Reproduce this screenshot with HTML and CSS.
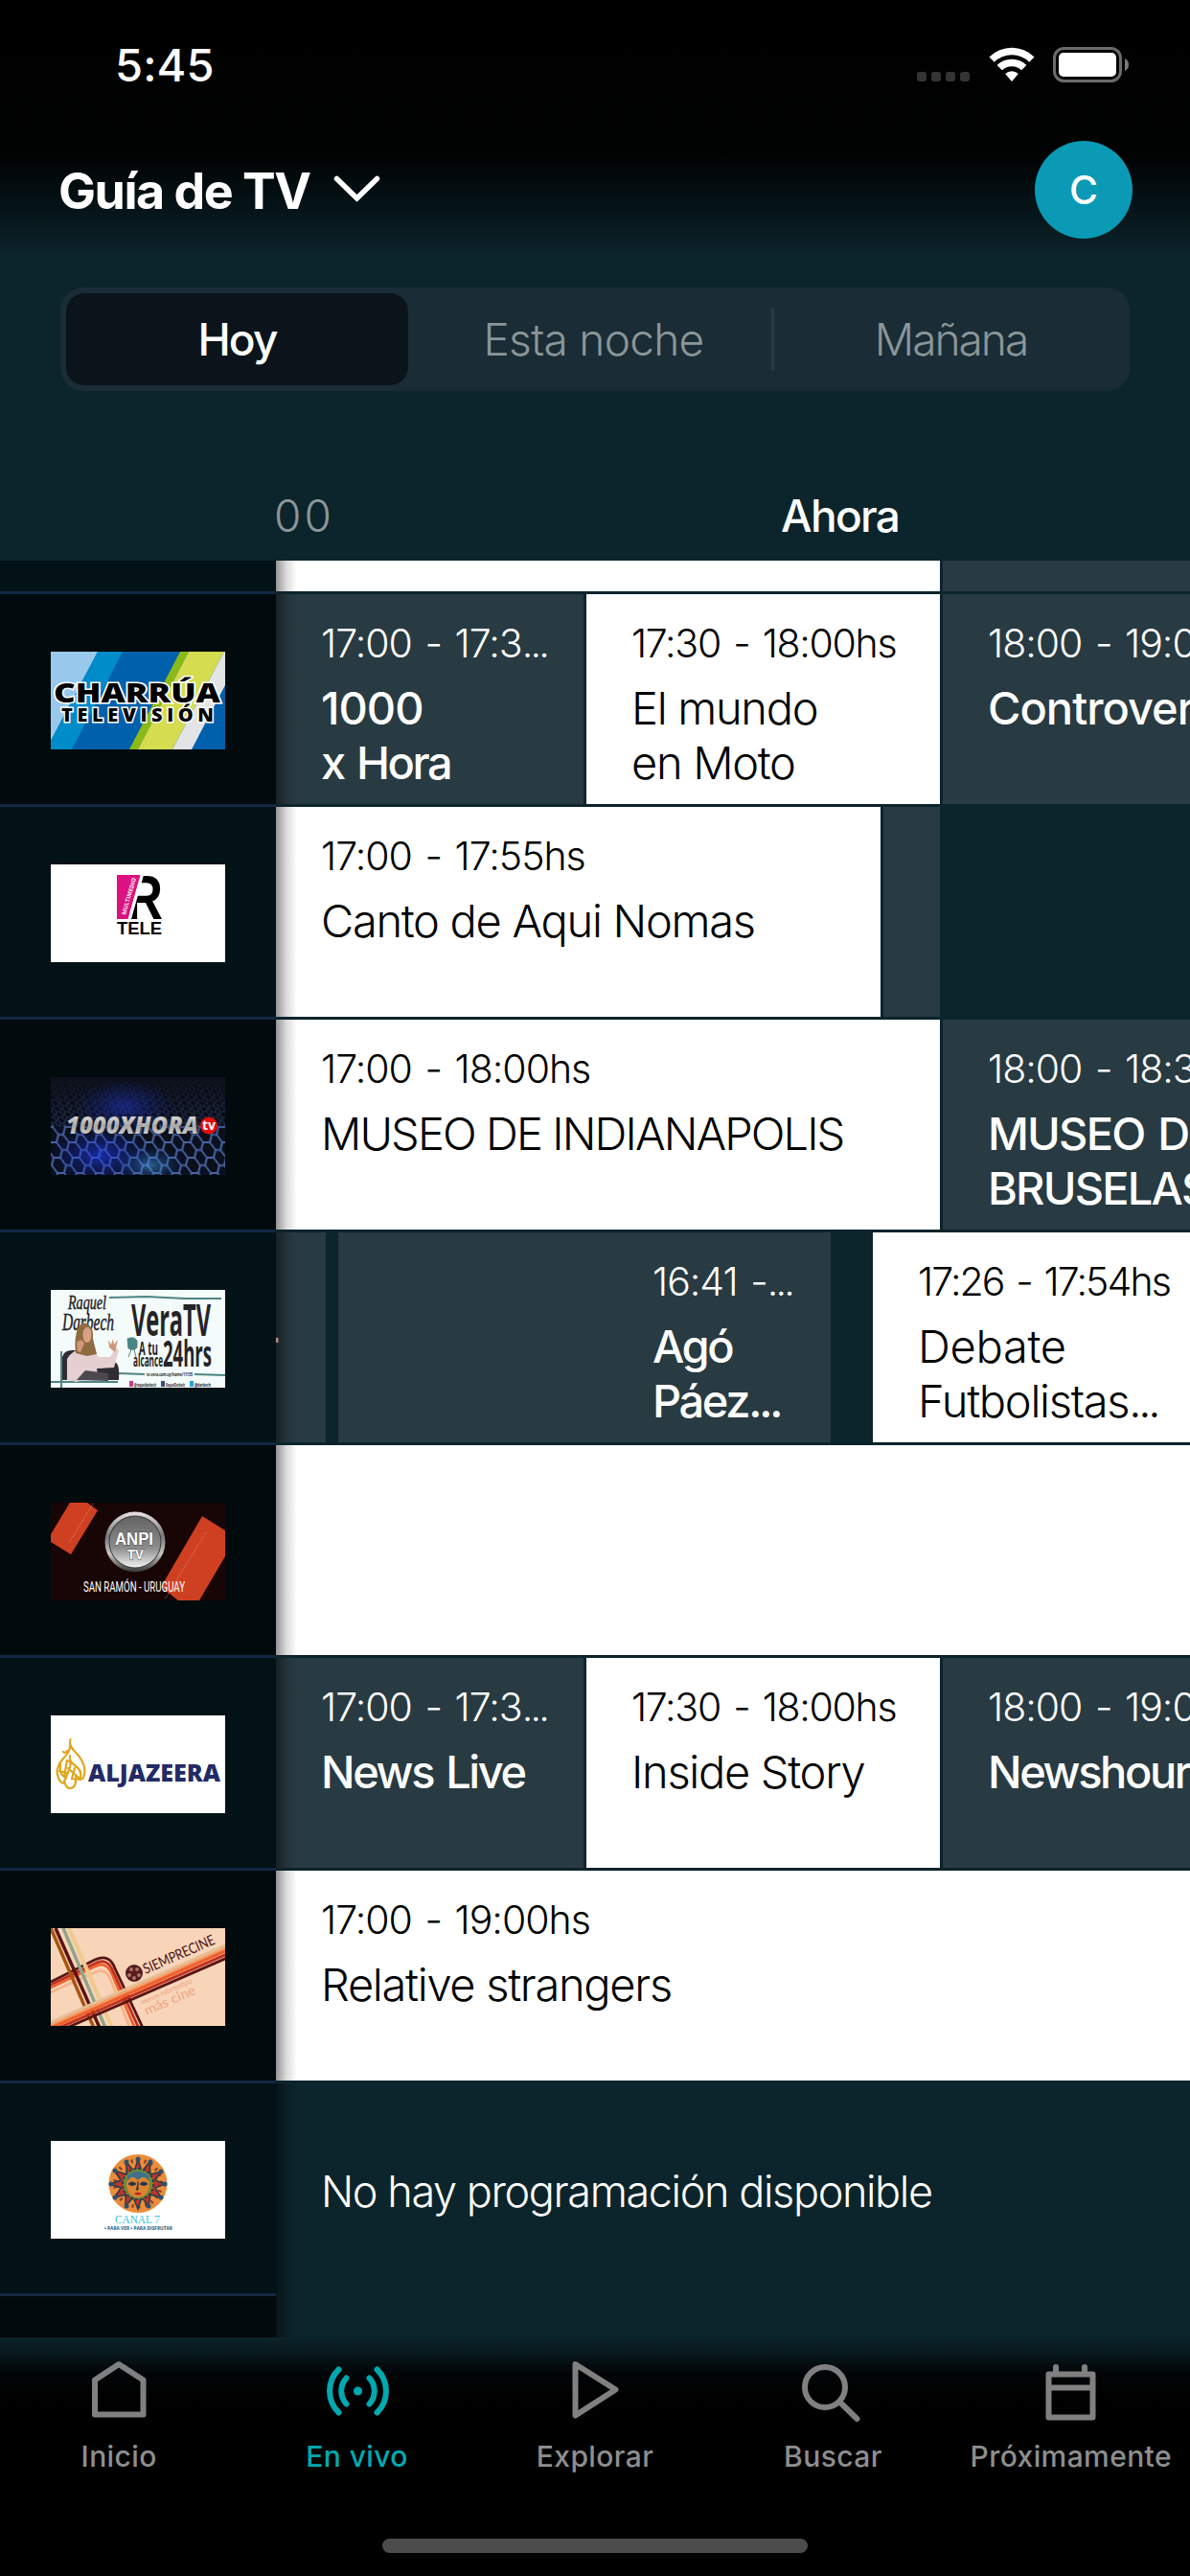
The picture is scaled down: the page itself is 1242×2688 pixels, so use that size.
FILE: index.html
```html
<!DOCTYPE html>
<html lang="es">
<head>
<meta charset="utf-8">
<title>Guía de TV</title>
<link rel="stylesheet" href="styles.css">
</head>
<body>
<div class="app">
  <header class="top">
    <div class="status">
      <span class="clock">5:45</span>
      <div class="status-icons">
        <div class="dots"><i></i><i></i><i></i><i></i></div>
        <svg class="wifi" width="48" height="36" viewBox="0 0 48 36" fill="#fff">
          <path d="M0.5 10.5a33.5 33.5 0 0 1 47 0l-5.2 5.3a26 26 0 0 0-36.600 0z"/>
          <path d="M8.600 19a22 22 0 0 1 30.800 0l-5.300 5.300a14.500 14.500 0 0 0-20.200 0z"/>
          <path d="M17.200 28a10 10 0 0 1 13.600 0l-6.300 7.400q-.5.5-1 0z"/>
        </svg>
        <svg class="battery" width="80" height="38" viewBox="0 0 80 38">
          <rect x="1.500" y="1.500" width="69" height="34" rx="10" fill="none" stroke="#6b6b6b" stroke-width="3"/>
          <rect x="6" y="6" width="60" height="25" rx="5" fill="#fff"/>
          <path d="M75 12q4 2 4 6.500t-4 6.500z" fill="#7b7b7b"/>
        </svg>
      </div>
    </div>
    <div class="titlebar">
      <h1>Guía de TV</h1>
      <svg class="chevron" width="50" height="30" viewBox="0 0 50 30"><path d="M3.500 3.500 24.500 24 45.500 3.500" fill="none" stroke="#fff" stroke-width="5.500" stroke-linecap="round"/></svg>
      <span class="avatar">C</span>
    </div>
  </header>

  <nav class="days">
    <span class="day on">Hoy</span>
    <span class="day mid">Esta noche</span>
    <span class="day last">Mañana</span>
  </nav>

  <div class="times"><span class="hour">00</span><span class="now">Ahora</span></div>

  <main class="guide">
    <section class="row first">
      <div class="channel"></div>
      <div class="slots"><div class="slot live w693"></div><div class="slot fill"></div></div>
    </section>

    <section class="row">
      <div class="channel"><svg class="logo" viewBox="0 0 182 102">
        <rect width="182" height="102" fill="#0060ab"/>
        <path d="M0 0H49L0 93z" fill="#98c9ec"/><path d="M49 0H75L22 102H0V93z" fill="#008bc9"/>
        <path d="M135 0h9L91 102h-9z" fill="#8aba17"/><path d="M144 0h37L127 102H91z" fill="#d5dc4f"/><path d="M181 0h1v35L147 102h-20z" fill="#e3e4e6"/>
        <g class="charrua"><text x="3" y="53" font-size="28" textLength="174" lengthAdjust="spacingAndGlyphs">CHARRÚA</text><text x="11" y="73" font-size="20" textLength="159">TELEVISIÓN</text></g>
      </svg></div>
      <div class="slots">
        <div class="slot w321"><p class="when">17:00 - 17:3<span class="ell">...</span></p><p class="name"><span class="num">1000</span><br>x Hora</p></div>
        <div class="slot live w369"><p class="when mid">17:30 - 18:00hs</p><p class="name">El mundo<br>en Moto</p></div>
        <div class="slot fill"><p class="when">18:00 - 19:00hs</p><p class="name loose">Controversia</p></div>
      </div>
    </section>

    <section class="row">
      <div class="channel"><svg class="logo" viewBox="0 0 182 102">
        <rect width="182" height="102" fill="#fff"/>
        <text x="79" y="57" class="tele" font-size="64" textLength="38" lengthAdjust="spacingAndGlyphs">R</text>
        <path d="M69 11H97L84 57H69z" fill="#fff"/><path d="M69 11H93.500L80.500 57H69z" fill="#dc1280"/>
        <text class="tiny" fill="#fff" font-size="6" textLength="40" transform="translate(78 53) rotate(-74)">MULTIMEDIO</text>
        <text x="69" y="73" class="tele" font-size="19" textLength="47" lengthAdjust="spacingAndGlyphs">TELE</text>
      </svg></div>
      <div class="slots">
        <div class="slot live w631"><p class="when">17:00 - 17:55hs</p><p class="name">Canto de Aqui Nomas</p></div>
        <div class="slot w59"></div>
      </div>
    </section>

    <section class="row">
      <div class="channel"><svg class="logo" viewBox="0 0 182 102">
        <defs>
          <pattern id="hex" width="20" height="16" patternUnits="userSpaceOnUse" patternTransform="translate(90 52) skewX(14)"><path d="M5 0H12L16 8 12 16H5L1 8zM16 8H21M-1 8H1" fill="#0a0f1a" stroke="#4a68a8" stroke-width="1.800"/></pattern>
          <pattern id="hexs" width="9" height="6" patternUnits="userSpaceOnUse" patternTransform="skewX(20)"><path d="M2 0H5.500L7.500 3 5.500 6H2L0 3zM7.500 3H9" fill="#080c16" stroke="#3d5080" stroke-opacity=".8" stroke-width=".9"/></pattern>
          <radialGradient id="glow" cx=".28" cy=".8" r=".3"><stop offset="0" stop-color="#2040ff" stop-opacity=".6"/><stop offset="1" stop-color="#1020a0" stop-opacity="0"/></radialGradient>
          <radialGradient id="glow2" cx=".57" cy=".9" r=".2"><stop offset="0" stop-color="#50b0ff" stop-opacity=".5"/><stop offset="1" stop-color="#1040a0" stop-opacity="0"/></radialGradient>
          <radialGradient id="glow3" cx=".42" cy=".3" r=".28"><stop offset="0" stop-color="#2038d0" stop-opacity=".5"/><stop offset="1" stop-color="#1020a0" stop-opacity="0"/></radialGradient>
          <linearGradient id="dark" x2="0" y2="1"><stop offset="0" stop-color="#0d0f18" stop-opacity=".95"/><stop offset=".6" stop-color="#0a0e1c" stop-opacity="0"/></linearGradient>
          <linearGradient id="silver" x2="0" y2="1"><stop offset="0" stop-color="#fff"/><stop offset=".55" stop-color="#a8a8a8"/><stop offset="1" stop-color="#e4e4e4"/></linearGradient>
        </defs>
        <rect width="182" height="102" fill="#0b1020"/><rect width="182" height="52" fill="url(#hexs)"/><rect y="50" width="182" height="52" fill="url(#hex)"/>
        <rect width="182" height="102" fill="url(#dark)"/><rect width="182" height="102" fill="url(#glow)"/><rect width="182" height="102" fill="url(#glow2)"/><rect width="182" height="102" fill="url(#glow3)"/>
        <text class="hora" x="16" y="59" font-size="25" fill="url(#silver)" textLength="138" lengthAdjust="spacingAndGlyphs">1000XHORA</text>
        <circle cx="165" cy="50.500" r="9" fill="#e60c0c"/><text class="tiny" x="158" y="55" font-size="14" fill="#fff" textLength="14" lengthAdjust="spacingAndGlyphs">tv</text>
      </svg></div>
      <div class="slots">
        <div class="slot live w693"><p class="when">17:00 - 18:00hs</p><p class="name caps">MUSEO DE INDIANAPOLIS</p></div>
        <div class="slot fill"><p class="when">18:00 - 18:30hs</p><p class="name semi">MUSEO DE<br>BRUSELAS</p></div>
      </div>
    </section>

    <section class="row">
      <div class="channel"><svg class="logo" viewBox="0 0 182 102">
        <rect width="182" height="102" fill="#f4fbfb"/>
        <path d="M61 8 100 7 140 9 178 9M70 87 98 88M150 88 182 89M0 96 70 96M11 64V102" fill="none" stroke="#4d8583" stroke-width="2"/>
        <g class="script"><text x="18" y="20" font-size="22" textLength="40" lengthAdjust="spacingAndGlyphs">Raquel</text><text x="12" y="42" font-size="26" textLength="54" lengthAdjust="spacingAndGlyphs">Darbech</text></g>
        <path d="M12 94V70q2-8 12-7h20q3 18 10 19V79q4-5 14-3 4 2 3 18z" fill="#2e2d33"/>
        <path d="M17 94V72q6-10 16-10 12-1 17 8l12 0 6-10 3 3-5 18-18 1 1 8-22 6z" fill="#e6cfd0"/>
        <path d="M29 38q5-6 10-2 6 4 5 15l4 16-10 2-12-3q-2-17 3-28z" fill="#8f6b42"/><ellipse cx="38" cy="47" rx="4.500" ry="8" fill="#d9a183"/>
        <path d="M27 55q5-6 8 1l-4 9-3-1zM61 60l-1-8 3 5 2-6 1 6 4-5-3 13z" fill="#cf987a"/>
        <path d="M27 94 36 84l24 3v8z" fill="#4b4850"/>
        <path d="M80 51q7-3 10 2v7q-3 4-9 1zM84 62l-3 8M87 62l2 8" fill="#4d8583" stroke="#4d8583"/>
        <g class="vera"><text x="84" y="48" font-size="47" textLength="83" lengthAdjust="spacingAndGlyphs">VeraTV</text><text x="92" y="68" font-size="19" textLength="20" lengthAdjust="spacingAndGlyphs">A tu</text><text x="86" y="80" font-size="17" textLength="31" lengthAdjust="spacingAndGlyphs">alcance</text><text x="117" y="80" font-size="37" textLength="51" lengthAdjust="spacingAndGlyphs">24hrs</text></g>
        <g class="tiny" fill="#222"><text x="100" y="90" font-size="6" textLength="48" lengthAdjust="spacingAndGlyphs">tv.vera.com.uy/home/11135</text><text x="87" y="101" font-size="6" textLength="23" lengthAdjust="spacingAndGlyphs">@raqueldarbech</text><text x="120" y="101" font-size="6" textLength="20" lengthAdjust="spacingAndGlyphs">RaquelDarbech</text><text x="150" y="101" font-size="6" textLength="17" lengthAdjust="spacingAndGlyphs">@darbech</text></g>
        <rect x="82" y="95" width="4" height="6" fill="#c8399a"/><rect x="115" y="95" width="4" height="6" fill="#344e86"/><rect x="145" y="95" width="4" height="6" fill="#2a9fe0"/>
      </svg></div>
      <div class="slots">
        <div class="slot w52 tail"><p class="when">&nbsp;</p><p class="name">r</p></div>
        <div class="slot w514"><p class="when">16:41 -<span class="ell">...</span></p><p class="name">Agó<br>Páez<span class="ell">...</span></p></div>
        <div class="slot live fill wide"><p class="when tight">17:26 - 17:54hs</p><p class="name"><span class="open">Debate</span><br>Futbolistas<span class="ell">...</span></p></div>
      </div>
    </section>

    <section class="row">
      <div class="channel"><svg class="logo" viewBox="0 0 182 102">
        <defs><linearGradient id="ring" x2="0" y2="1"><stop offset="0" stop-color="#e8e6e4"/><stop offset=".4" stop-color="#777"/><stop offset=".7" stop-color="#c8c5c2"/><stop offset="1" stop-color="#333"/></linearGradient><linearGradient id="disc" x2="0" y2="1"><stop offset="0" stop-color="#646464"/><stop offset=".6" stop-color="#8a8a8a"/><stop offset="1" stop-color="#f0f0f0"/></linearGradient></defs>
        <rect width="182" height="102" fill="#180505"/>
        <path d="M20 0H38L49 8 21 54 0 41V33zM158 14 182 29V56L155 102H133L115 88z" fill="#cf4023"/>
        <path d="M44 1 19 42M162 31 119 101" stroke="#e5b8aa" stroke-width=".7" stroke-dasharray="1 1.500"/>
        <circle cx="88" cy="41" r="31.500" fill="url(#ring)"/><circle cx="88" cy="41" r="27.500" fill="#3c3c3c"/><circle cx="88" cy="41" r="26.500" fill="url(#disc)"/>
        <g class="anpi"><text x="67" y="44" font-size="19" textLength="40" lengthAdjust="spacingAndGlyphs">ANPI</text><text x="80" y="59" font-size="15" textLength="17" lengthAdjust="spacingAndGlyphs">TV</text></g>
        <text class="place" x="34" y="93" font-size="14" textLength="106" lengthAdjust="spacingAndGlyphs">SAN RAMÓN - URUGUAY</text>
      </svg></div>
      <div class="slots"><div class="slot live fill"></div></div>
    </section>

    <section class="row">
      <div class="channel"><svg class="logo" viewBox="0 0 182 102">
        <rect width="182" height="102" fill="#fff"/>
        <path d="M20.500 25q-2 6 4 12 11 11 11 21 0 9-6 9M20 30q1 7-7 15-8 9-6 17 2 9 8 9M17 37q-2 3-4 1M10 50q-1 12 4 14l3-17q5 1 3 7l-5 13M20 42q-1 6 5 10 8 6 6 12-3 4-9 2l3-11M14 68q2 9 7 8 6-1 5-12M18 55l10 9M9 58l9 2" fill="none" stroke="#e0a61c" stroke-width="2.200" stroke-linecap="round"/>
        <text class="jaz" x="39" y="69" font-size="24" textLength="138" lengthAdjust="spacingAndGlyphs">ALJAZEERA</text>
      </svg></div>
      <div class="slots">
        <div class="slot w321"><p class="when">17:00 - 17:3<span class="ell">...</span></p><p class="name">News Live</p></div>
        <div class="slot live w369"><p class="when mid">17:30 - 18:00hs</p><p class="name">Inside Story</p></div>
        <div class="slot fill"><p class="when">18:00 - 19:00hs</p><p class="name">Newshour</p></div>
      </div>
    </section>

    <section class="row">
      <div class="channel"><svg class="logo" viewBox="0 0 182 102">
        <rect width="182" height="102" fill="#f8d5b9"/>
        <g fill="none" stroke-width="2.800">
          <path d="M-2 57 46 35Q57 30 62 42L87 104" stroke="#f6b48a" transform="translate(0 11)"/>
          <path d="M-2 57 46 34Q58 28 64 42L90 104" stroke="#f0622d" transform="translate(0 6)"/>
          <path d="M-2 57 46 34Q59 27 65 42L93 104" stroke="#c0301c" transform="translate(0 3)"/>
          <path d="M-2 57 46 33Q61 26 67 42L97 106" stroke="#5a1412"/>
          <path d="M0 0 45 104" stroke="#a85412" stroke-width="3.500"/><path d="M5 0 51 104" stroke="#5a1412" stroke-width="3.500"/><path d="M13 0 57 104" stroke="#8fa58c" stroke-width="3.500"/><path d="M19 0 64 104" stroke="#f0ca8c" stroke-width="4"/>
          <path d="M-2 99 184 17" stroke="#e5be95"/><path d="M-2 102 184 20" stroke="#f3a06c"/><path d="M-2 105 184 23" stroke="#f0622d" stroke-width="3.500"/><path d="M4 106 184 27" stroke="#c0301c"/><path d="M12 106 184 31" stroke="#5a1412"/>
        </g>
        <circle cx="87" cy="47" r="9" fill="#5a1820"/><g fill="#a77762"><circle cx="84" cy="43" r="2"/><circle cx="90" cy="43" r="2"/><circle cx="82" cy="49" r="2"/><circle cx="87" cy="52" r="2"/><circle cx="92" cy="49" r="2"/></g>
        <g class="cine"><text transform="translate(99 48) rotate(-23.500)" font-size="15" fill="#4a1014" textLength="80" lengthAdjust="spacingAndGlyphs">SIEMPRECINE</text><text transform="translate(95 80) rotate(-23.500)" font-size="7.500" fill="#f0a37e" textLength="58" lengthAdjust="spacingAndGlyphs">menos estereotipo</text><text transform="translate(100 91) rotate(-23.500)" font-size="14" fill="#f0a37e" textLength="57" lengthAdjust="spacingAndGlyphs">más cine</text></g>
      </svg></div>
      <div class="slots"><div class="slot live fill"><p class="when">17:00 - 19:00hs</p><p class="name">Relative strangers</p></div></div>
    </section>

    <section class="row empty">
      <div class="channel"><svg class="logo" viewBox="0 0 182 102">
        <rect width="182" height="102" fill="#fff"/><circle cx="91" cy="44.500" r="30.500" fill="#ea8d3a"/>
        <circle cx="91" cy="44.500" r="24" fill="none" stroke="#84402a" stroke-width="4" stroke-dasharray="2 5"/>
        <path d="M91 19 95 32 103 22 104 35 115 32 109 41 119 45 109 49 115 59 104 56 102 68 95 59 91 71 86 59 78 68 78 56 67 59 73 49 62 45 73 41 67 31 79 35 79 22 87 32z" fill="#b9352a" stroke="#243c4c" stroke-width="1.500"/>
        <circle cx="91" cy="45" r="16" fill="#6d8a3a" stroke="#23364a" stroke-width="1.500" stroke-dasharray="3 2"/>
        <g fill="#2e5070"><circle cx="91" cy="19" r="2.500"/><circle cx="104" cy="22" r="2.500"/><circle cx="115" cy="32" r="2.500"/><circle cx="119" cy="45" r="2.500"/><circle cx="115" cy="59" r="2.500"/><circle cx="102" cy="68" r="2.500"/><circle cx="79" cy="68" r="2.500"/><circle cx="67" cy="59" r="2.500"/><circle cx="63" cy="45" r="2.500"/><circle cx="67" cy="31" r="2.500"/><circle cx="79" cy="22" r="2.500"/></g>
        <ellipse cx="91" cy="46" rx="12" ry="13" fill="#df8232"/><path d="M80 42q5-8 11-1 6-7 11 1V36q-11-8-22 0z" fill="#41708c"/><path d="M81 45q4-4 8 0-4 3-8 0zM93 45q4-4 8 0-4 3-8 0zM91 42v9h-2" fill="#22364e" stroke="#22364e"/><path d="M87 55q4-3 8 0-4 3-8 0z" fill="#b9241e"/>
        <text class="canal" x="67" y="86" font-size="13" textLength="47" lengthAdjust="spacingAndGlyphs">CANAL 7</text><text class="tiny" x="56" y="93" font-size="5" fill="#0c5a80" textLength="71" lengthAdjust="spacingAndGlyphs">• PARA VER • PARA DISFRUTAR</text>
      </svg></div>
      <div class="slots"><p class="none">No hay programación disponible</p></div>
    </section>

    <section class="row last"><div class="channel"></div><div class="slots"></div></section>
  </main>

  <footer class="tabs">
    <div class="tabrow">
      <a class="tab"><svg viewBox="0 0 72 72"><path d="M11 25.500 36 9 61.500 25.500V61.500H11z"/></svg>Inicio</a>
      <a class="tab on"><svg viewBox="0 0 72 72"><path d="M16.500 14.500a31.500 31.500 0 0 0 0 45M24.500 23.500a20 20 0 0 0 0 27M56.500 14.500a31.500 31.500 0 0 1 0 45M48.500 23.500a20 20 0 0 1 0 27"/><circle class="dot" cx="36.500" cy="37" r="4.600"/></svg>En vivo</a>
      <a class="tab"><svg viewBox="0 0 72 72"><path d="M15.500 9 57.500 35.500 15.500 62.500z"/></svg>Explorar</a>
      <a class="tab"><svg viewBox="0 0 72 72"><circle cx="28" cy="33" r="21"/><path d="M43.500 48.500 61.500 66"/></svg>Buscar</a>
      <a class="tab"><svg viewBox="0 0 72 72"><path d="M12.500 19.500h46V64.500H12.500zM12.500 33.500h46M20 12v7M50 12v7"/></svg>Próximamente</a>
    </div>
    <div class="home"></div>
  </footer>
</div>
</body>
</html>
```
FILE: styles.css
```css
* { box-sizing: border-box; margin: 0; padding: 0; }
body { background: #0c242b; color: #fff; font-family: Inter, sans-serif; }
.app { width: 1242px; height: 2688px; overflow: hidden; display: flex; flex-direction: column; background: #0c242b; }

/* Header */
.top { height: 300px; flex: none; background: linear-gradient(#000 0, #010202 160px, #041014 205px, #0c242b 268px); }
.status { height: 147px; padding: 49px 63px 0 120px; display: flex; justify-content: space-between; align-items: flex-start; }
.clock { font-size: 47px; font-weight: 550; line-height: 38px; letter-spacing: .1px; }
.status-icons { display: flex; align-items: flex-start; }
.dots { display: flex; gap: 5px; margin: 26px 20px 0 0; }
.dots i { width: 10px; height: 10px; border-radius: 3px; background: #343434; }
.battery { margin-left: 19px; }
.titlebar { height: 102px; padding: 0 60px 0 61px; display: flex; align-items: center; }
h1 { padding-top: 3px; font-size: 52px; font-weight: 750; letter-spacing: -1.5px; line-height: 60px; }
.chevron { margin-left: 24px; }
.avatar { width: 102px; height: 102px; margin-left: auto; border-radius: 50%; background: #0a9ab5; font-size: 41px; font-weight: 500; line-height: 102px; text-align: center; }

/* Day selector */
.days { height: 108px; flex: none; margin: 0 63px; padding: 6px; display: grid; grid-template-columns: 357px 1fr 365px; background: #1a2c35; border-radius: 24px; }
.day { font-size: 46px; line-height: 96px; text-align: center; font-weight: 300; color: #8b9699; letter-spacing: -.7px; }
.day.on { background: #0c141b; border-radius: 19px; color: #fff; font-weight: 500; letter-spacing: -1.8px; }
.day.mid { position: relative; padding-left: 5px; }
.day.mid::after { content: ""; position: absolute; right: 0; top: 15px; width: 3px; height: 66px; background: #29393f; }
.day.last { padding-left: 4px; letter-spacing: -2px; }

.times { height: 177px; flex: none; padding: 102px 0 0 286px; display: flex; font-size: 46px; line-height: 56px; }
.hour { width: 529px; font-weight: 300; color: #8b9699; letter-spacing: 3px; }
.now { font-weight: 550; letter-spacing: -1.700px; }

/* Programme grid */
.guide { flex: none; height: 1854px; overflow: hidden; }
.row { display: grid; grid-template-columns: 288px 1fr; height: 222px; }
.row.first { height: 35px; }
.row.last { height: 43px; }
.channel { border-bottom: 3px solid #132744; background: #010a0d; display: flex; align-items: flex-start; padding: 60px 53px 0; }
.row:nth-child(odd) .channel { background: #031216; }
.row.last .channel { border: 0; background: #010a0d; }
.first .channel, .first .slot, .last .channel { padding: 0; }
.logo { width: 182px; height: 102px; display: block; }
.slots { position: relative; display: flex; gap: 3px; padding-bottom: 3px; overflow: hidden; min-width: 0; }
.slots::after { content: ""; position: absolute; left: 0; top: 0; bottom: 3px; width: 22px; background: linear-gradient(90deg, rgba(0,0,0,.42), rgba(0,0,0,.14) 50%, transparent); }
.empty .slots::after, .last .slots::after { bottom: 0; }
.slot { flex: none; padding: 43px 0 0 47px; background: #283a42; overflow: hidden; white-space: nowrap; }
.slot.live { background: #fff; color: #000; }
.slot.fill { flex: 1; min-width: 0; }
.w693 { width: 693px; }
.w631 { width: 631px; }
.w369 { width: 369px; }
.w321 { width: 321px; }
.w59 { width: 59px; }
.w52 { width: 52px; }
.w514 { width: 514px; margin-left: 10px; padding-left: 328px; }
.wide { margin-left: 41px; }
.tail { padding-left: 0; }
.tail .name { margin-left: -15px; }
.when { font-size: 41px; font-weight: 260; line-height: 16px; height: 16px; letter-spacing: -1px; word-spacing: 3px; }
.when.mid { letter-spacing: -1.300px; }
.when.tight { letter-spacing: -1.900px; }
.name { margin-top: 31px; font-size: 47px; font-weight: 550; line-height: 57px; letter-spacing: -2.400px; word-spacing: 3px; }
.name.loose { letter-spacing: -1px; }
.name.semi { letter-spacing: -1.800px; }
.num { letter-spacing: -1px; }
.ell { letter-spacing: -2.800px; }
.name .ell { letter-spacing: -3.200px; }
.live .name { font-weight: 350; letter-spacing: -1.300px; word-spacing: 0; }
.live .name.caps { letter-spacing: -1.900px; }
.open { letter-spacing: -.3px; }
.none { padding: 86px 0 0 47px; font-size: 45px; font-weight: 350; line-height: 54px; letter-spacing: -1.400px; }

/* Channel artwork lettering */
.charrua { font: 800 20px "Open Sans", sans-serif; fill: #000; paint-order: stroke; stroke: #fff; stroke-width: 3px; }
.tele { font-family: "Liberation Sans", sans-serif; font-weight: 700; }
.hora { font-family: "Open Sans", sans-serif; font-weight: 800; font-style: italic; paint-order: stroke; stroke: #10131c; stroke-width: 1px; }
.tiny { font-family: "Open Sans", sans-serif; font-weight: 700; }
.script { font-family: "Liberation Serif", serif; font-style: italic; fill: #222; stroke: #222; stroke-width: .5px; }
.vera { font-family: "Open Sans", sans-serif; font-weight: 700; fill: #252427; }
.anpi { font-family: "Liberation Sans", sans-serif; font-weight: 700; fill: #fff; paint-order: stroke; stroke: #444; stroke-width: 1px; }
.place { font-family: Roboto, sans-serif; fill: #fff; }
.jaz { font-family: "Open Sans", sans-serif; font-weight: 800; fill: #222b66; }
.cine { font-family: Lato, sans-serif; }
.canal { font-family: "Liberation Serif", serif; fill: #2ec4dc; }

/* Tab bar */
.tabs { height: 249px; flex: none; display: flex; flex-direction: column; justify-content: space-between; align-items: center; background: linear-gradient(#0c242b 0, #07171c 18px, #020507 38px, #010101 60px, #000 100px); }
.tabrow { width: 1242px; padding-top: 19px; display: grid; grid-template-columns: repeat(5, 1fr); }
.tab { display: flex; flex-direction: column; align-items: center; gap: 15px; font-size: 30px; font-weight: 500; line-height: 36px; letter-spacing: .4px; color: #8e8e8e; white-space: nowrap; }
.tab svg { width: 72px; height: 72px; fill: none; stroke: #808080; stroke-width: 6; stroke-linejoin: round; stroke-linecap: round; }
.tab.on { color: #00a9b0; }
.tab.on svg { stroke: #00a9b0; }
.tab .dot { fill: #00a9b0; stroke: none; }
.home { width: 444px; height: 15px; margin-bottom: 24px; border-radius: 8px; background: #4c4c4c; }
```
